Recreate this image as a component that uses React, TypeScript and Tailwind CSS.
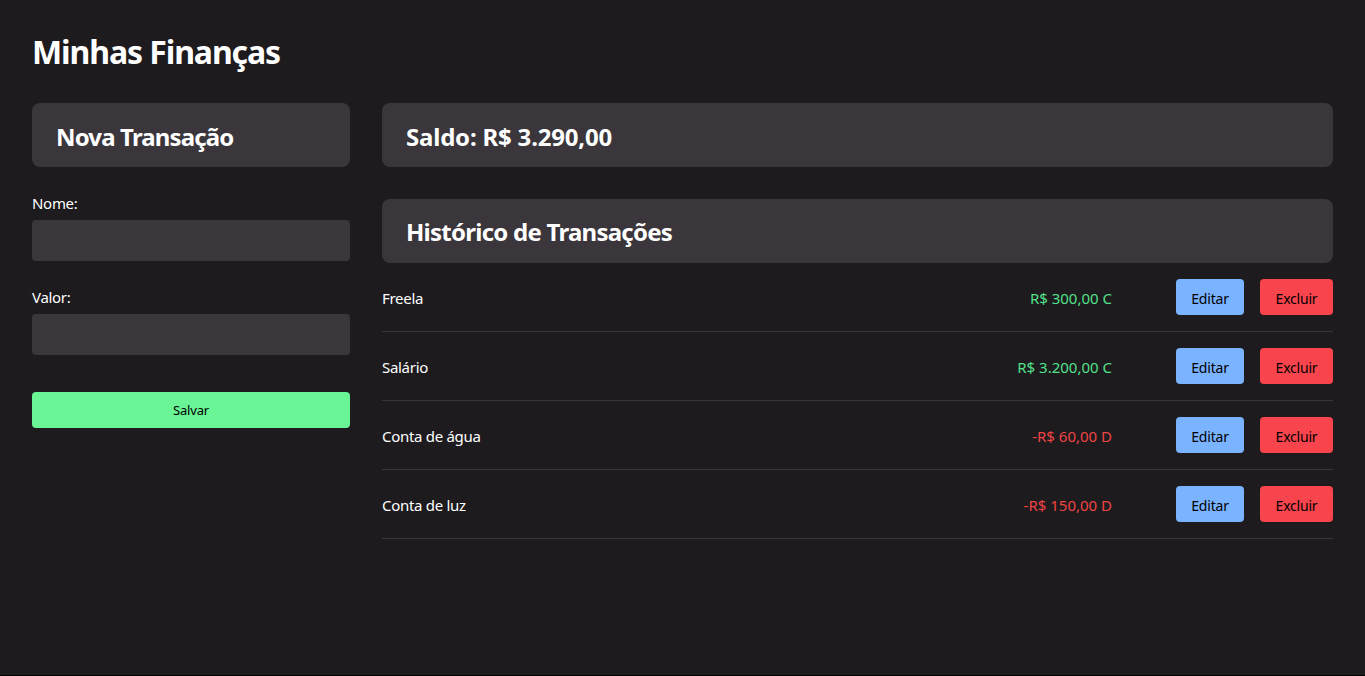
import React from "react";

const rows = [
  { name: "Freela", value: "R$ 300,00 C", pos: true },
  { name: "Salário", value: "R$ 3.200,00 C", pos: true },
  { name: "Conta de água", value: "-R$ 60,00 D", pos: false },
  { name: "Conta de luz", value: "-R$ 150,00 D", pos: false },
];

export default function App() {
  return (
    <div
      className="min-h-[676px] bg-[#1d1b1e] text-white px-8 pt-[28px] border-b border-black"
      style={{ fontFamily: '"Noto Sans", "Open Sans", sans-serif' }}
    >
      <h1 className="text-[32px] font-bold leading-[48px] tracking-[-1.1px] mb-[27px]">Minhas Finanças</h1>
      <div className="grid grid-cols-[318px_1fr] gap-8">
        <div className="flex flex-col">
          <div className="bg-[#3a363b] rounded-lg h-16 px-6 pt-[3px] flex items-center">
            <h2 className="text-[24px] font-bold tracking-[-0.85px]">Nova Transação</h2>
          </div>
          <label className="text-[15px] leading-6 mt-6 tracking-[-0.3px]">Nome:</label>
          <div className="bg-[#3a363b] rounded-[4px] h-[41px] mt-[5px]" />
          <label className="text-[15px] leading-6 mt-6 tracking-[-0.3px]">Valor:</label>
          <div className="bg-[#3a363b] rounded-[4px] h-[41px] mt-[5px]" />
          <button className="bg-[#69f495] text-black text-[13px] rounded-[4px] h-9 pt-[2px] mt-[37px] tracking-[-0.2px]">Salvar</button>
        </div>
        <div className="flex flex-col pr-[1px] -mr-[1px]">
          <div className="bg-[#3a363b] rounded-lg h-16 px-6 pt-[4px] flex items-center">
            <h2 className="text-[24px] font-bold tracking-[-0.2px]">Saldo: R$ 3.290,00</h2>
          </div>
          <div className="bg-[#3a363b] rounded-lg h-16 px-6 pt-[2px] flex items-center mt-8">
            <h2 className="text-[24px] font-bold tracking-[-0.75px]">Histórico de Transações</h2>
          </div>
          {rows.map((r) => (
            <div key={r.name} className="flex items-center py-4 border-b border-[#38353a]">
              <span className="flex-1 text-[15px] pt-[2px] tracking-[-0.3px]">{r.name}</span>
              <span className={`text-[15px] pt-[2px] tracking-[0px] mr-16 ${r.pos ? "text-[#52e08a]" : "text-[#ef4444]"}`}>{r.value}</span>
              <button className="bg-[#7ab3ff] text-black text-[14px] rounded-[4px] h-9 pt-[3px] w-[68px] tracking-[-0.2px]">Editar</button>
              <button className="bg-[#f8444c] text-black text-[14px] rounded-[4px] h-9 pt-[3px] w-[73px] ml-4 tracking-[-0.2px]">Excluir</button>
            </div>
          ))}
        </div>
      </div>
    </div>
  );
}
